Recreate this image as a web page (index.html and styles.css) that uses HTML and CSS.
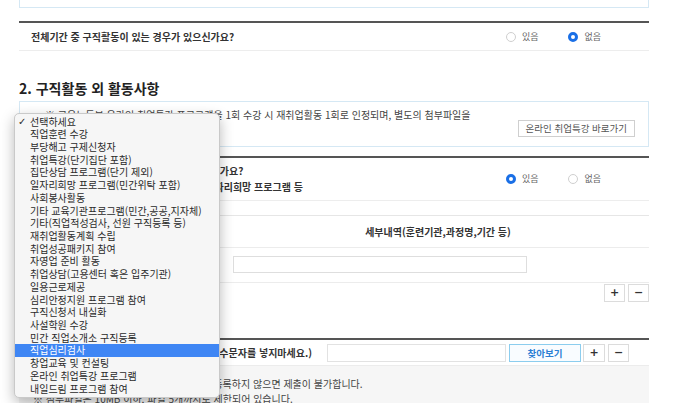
FILE: index.html
```html
<!DOCTYPE html>
<html lang="ko">
<head>
<meta charset="utf-8">
<title>구직활동 외 활동사항</title>
<link rel="stylesheet" href="styles.css">
</head>
<body>
<div class="page">
  <div class="topbox"></div>

  <div class="qblock first">
    <div class="qrow">
      <p class="qtext">전체기간 중 구직활동이 있는 경우가 있으신가요?</p>
      <div class="radios">
        <span class="radio"><i class="dot"></i>있음</span>
        <span class="radio checked"><i class="dot"></i>없음</span>
      </div>
    </div>
  </div>

  <h2 class="sec-title">2. 구직활동 외 활동사항</h2>

  <div class="infobox">
    <p class="info-text">※ 고용노동부 온라인 취업특강 프로그램을 1회 수강 시 재취업활동 1회로 인정되며, 별도의 첨부파일을<br>제출하지 않아도 됩니다.</p>
    <button class="btn-link" type="button">온라인 취업특강 바로가기</button>
  </div>

  <div class="qblock second">
    <div class="qrow">
      <p class="qtext">구직활동 외에 다른 재취업활동 사항이 있으신가요?<br>예) 집단상담 및 직업훈련 수강, 취업특강, 일자리희망 프로그램 등</p>
      <div class="radios">
        <span class="radio checked"><i class="dot"></i>있음</span>
        <span class="radio"><i class="dot"></i>없음</span>
      </div>
    </div>
  </div>

  <div class="acttable">
    <div class="thead">
      <div class="c1">구분</div>
      <div class="c2">세부내역(훈련기관,과정명,기간 등)</div>
    </div>
    <div class="trow">
      <div class="c1"><div class="selectbox">선택하세요</div></div>
      <div class="c2"><div class="textinput"></div></div>
    </div>
  </div>

  <div class="rowbtns">
    <button class="sqbtn" type="button">+</button>
    <button class="sqbtn" type="button">−</button>
  </div>

  <div class="attach">
    <span class="attach-label">활동내역 증빙서류 첨부파일 (파일명에 특수문자를 넣지마세요.)</span>
    <div class="fileinput"></div>
    <button class="btn-find" type="button">찾아보기</button>
    <button class="sqbtn plus" type="button">+</button>
    <button class="sqbtn minus" type="button">−</button>
  </div>

  <div class="note">
    <p>※ 활동내역 증빙서류를 반드시 첨부파일로 등록하지 않으면 제출이 불가합니다.</p>
    <p>※ 첨부파일은 10MB 이하, 파일 5개까지로 제한되어 있습니다.</p>
  </div>

  <ul class="menu">
    <li class="sel">선택하세요</li>
    <li>직업훈련 수강</li>
    <li>부당해고 구제신청자</li>
    <li>취업특강(단기집단 포함)</li>
    <li>집단상담 프로그램(단기 제외)</li>
    <li>일자리희망 프로그램(민간위탁 포함)</li>
    <li>사회봉사활동</li>
    <li>기타 교육기관프로그램(민간,공공,지자체)</li>
    <li>기타(직업적성검사, 선원 구직등록 등)</li>
    <li>재취업활동계획 수립</li>
    <li>취업성공패키지 참여</li>
    <li>자영업 준비 활동</li>
    <li>취업상담(고용센터 혹은 입주기관)</li>
    <li>일용근로제공</li>
    <li>심리안정지원 프로그램 참여</li>
    <li>구직신청서 내실화</li>
    <li>사설학원 수강</li>
    <li>민간 직업소개소 구직등록</li>
    <li class="hl">직업심리검사</li>
    <li>창업교육 및 컨설팅</li>
    <li>온라인 취업특강 프로그램</li>
    <li>내일드림 프로그램 참여</li>
  </ul>
</div>
</body>
</html>
```
FILE: styles.css
```css
html, body {
  margin: 0;
  padding: 0;
  background: #fff;
}
body {
  font-family: "Noto Sans CJK KR", "Noto Sans", sans-serif;
  color: #333;
  overflow: hidden;
}
.page {
  position: relative;
  margin: 0 35px 0 19px;
}
.topbox {
  height: 7px;
  border: 1px solid #d5e8f4;
  border-top: 0;
}
.qblock {
  border-top: 2px solid #555;
}
.qblock.first { margin-top: 13px; }
.qblock.second { margin-top: 9px; }
.qrow {
  display: flex;
  align-items: center;
  padding: 6px 0 5px 12px;
  border-bottom: 1px solid #ededed;
}
.second .qrow { padding-top: 5px; }
.qtext {
  flex: 1;
  margin: 0;
  font-size: 10px;
  font-weight: 700;
  line-height: 16px;
  color: #333;
  white-space: nowrap;
}
.radios {
  display: flex;
  gap: 30px;
  margin-right: 48px;
}
.radio {
  display: flex;
  align-items: center;
  gap: 6px;
  font-size: 9px;
  line-height: 16px;
  color: #666;
}
.dot {
  width: 10px;
  height: 10px;
  box-sizing: border-box;
  border-radius: 50%;
  border: 1px solid #cfcfcf;
  background: #fff;
}
.checked .dot {
  border: 3px solid #1a6fe6;
}
.sec-title {
  margin: 27px 0 3px;
  font-size: 14px;
  line-height: 20px;
  font-weight: 700;
  color: #222;
}
.infobox {
  display: flex;
  align-items: flex-end;
  border: 1px solid #d5e8f4;
  padding: 5px 13px 9px 25px;
}
.info-text {
  flex: 1;
  margin: 0;
  font-size: 10px;
  line-height: 15px;
  color: #444;
  white-space: nowrap;
}
.btn-link {
  height: 17px;
  padding: 0 7px;
  font-family: inherit;
  font-size: 9.5px;
  line-height: 15px;
  color: #555;
  background: #fff;
  border: 1px solid #cfcfcf;
}
.acttable {
  margin-top: 14px;
  border-top: 1px solid #e6e6e6;
}
.thead {
  display: flex;
  align-items: center;
  height: 31px;
  border-bottom: 1px solid #ececec;
  font-size: 10px;
  font-weight: 700;
  color: #333;
}
.c1 {
  width: 208px;
  flex: 0 0 208px;
  text-align: center;
}
.c2 {
  flex: 1;
  text-align: center;
}
.trow {
  display: flex;
  height: 34px;
  border-bottom: 1px solid #ececec;
}
.trow .c2 {
  text-align: left;
  padding: 8px 0 0 6px;
}
.trow .c1 {
  padding: 8px 0 0 6px;
  box-sizing: border-box;
}
.selectbox {
  width: 180px;
  height: 17px;
  box-sizing: border-box;
  border: 1px solid #ddd;
  font-size: 9.5px;
  line-height: 15px;
  text-align: left;
  padding-left: 4px;
}
.textinput {
  width: 294px;
  height: 17px;
  box-sizing: border-box;
  border: 1px solid #dedede;
  background: #fff;
}
.rowbtns {
  display: flex;
  justify-content: flex-end;
  gap: 3px;
  margin-top: 1px;
}
.sqbtn {
  width: 21px;
  height: 18px;
  padding: 0;
  box-sizing: border-box;
  border: 1px solid #dcdcdc;
  background: #fff;
  font-family: "DejaVu Sans", sans-serif;
  font-size: 11px;
  font-weight: 700;
  line-height: 16px;
  color: #333;
}
.attach {
  display: flex;
  align-items: center;
  height: 25px;
  margin-top: 36px;
  border-top: 2px solid #555;
  border-bottom: 1px solid #ececec;
  padding-right: 20px;
}
.attach-label {
  flex: 1;
  text-align: right;
  padding-right: 15px;
  font-size: 10px;
  font-weight: 700;
  color: #333;
  white-space: nowrap;
  overflow: hidden;
}
.fileinput {
  width: 179px;
  height: 18px;
  box-sizing: border-box;
  border: 1px solid #e2e2e2;
  background: #fff;
}
.btn-find {
  width: 72px;
  height: 18px;
  margin-left: 3px;
  padding: 0;
  box-sizing: border-box;
  border: 1px solid #8ccdee;
  background: #f9fcff;
  font-family: inherit;
  font-size: 9.5px;
  font-weight: 700;
  color: #2b7fd4;
  line-height: 16px;
}
.attach .plus { margin-left: 2px; width: 22px; }
.attach .minus { margin-left: 3px; }
.note {
  background: #f6f6f6;
  padding: 10px 0 0 14px;
  height: 40px;
}
.note p {
  margin: 0;
  font-size: 10px;
  line-height: 15px;
  color: #444;
  white-space: nowrap;
}
.menu {
  position: absolute;
  left: -5px;
  top: 113px;
  width: 206px;
  box-sizing: border-box;
  margin: 0;
  padding: 1.5px 0;
  list-style: none;
  background: #f6f6f6;
  border: 1px solid #c9c9c9;
  border-radius: 5px;
  box-shadow: 0 5px 14px rgba(0, 0, 0, 0.28);
  font-size: 10px;
  color: #2a2a2a;
}
.menu li {
  position: relative;
  height: 12.73px;
  line-height: 12.73px;
  padding-left: 15px;
  white-space: nowrap;
}
.menu li.sel::before {
  content: "✓";
  position: absolute;
  left: 3px;
  top: 0;
  font-family: "DejaVu Sans", sans-serif;
  font-weight: 700;
  font-size: 10px;
}
.menu li.hl {
  background: #3f86f4;
  color: #fff;
}
```
